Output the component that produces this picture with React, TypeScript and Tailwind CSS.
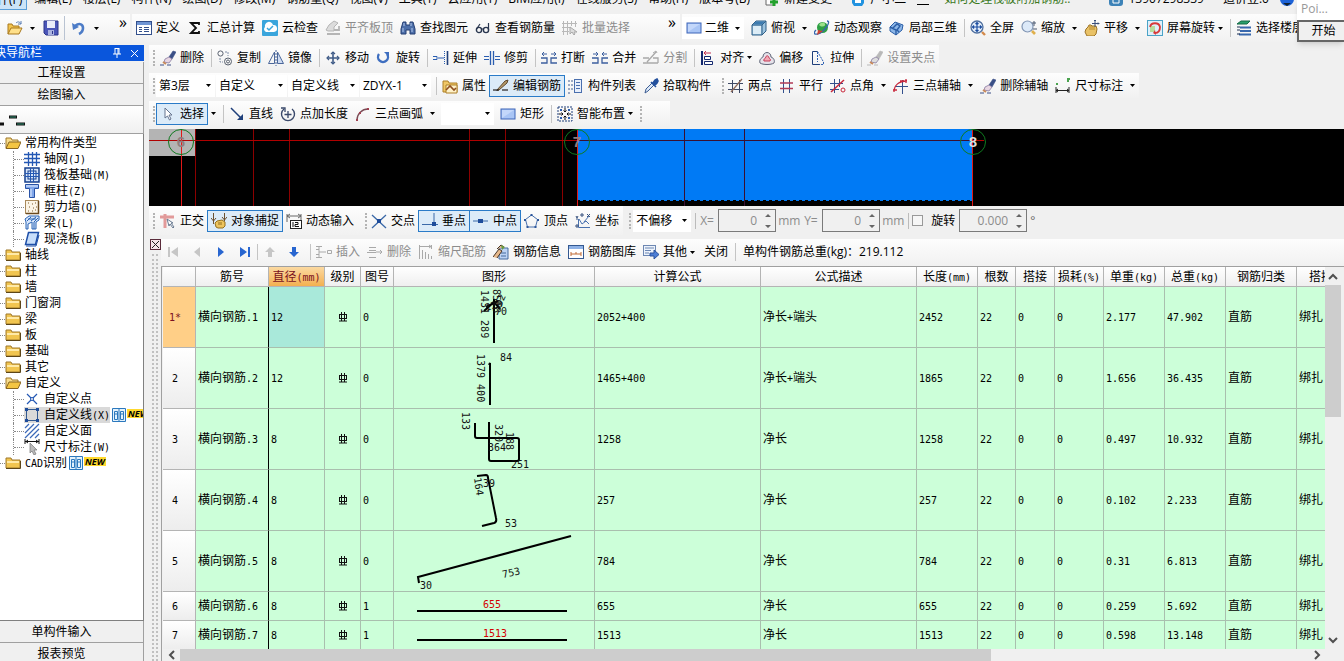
import type { ReactNode } from "react";

const blue = "#2a5db0";
const navy = "#1f3f7a";
const gray = "#a9a9a9";

function Icon({ children }: { children: ReactNode }) {
  return (
    <svg aria-hidden="true" className="shrink-0" fill="none" height="16" viewBox="0 0 16 16" width="16">
      {children}
    </svg>
  );
}

const brush = (tint: string, metal: string) => (
  <Icon>
    <path d="M9 7 13 1l3 1-4 7z" fill={tint} stroke={tint} strokeWidth=".6" />
    <path d="m5 9 4-2 3 2-3 4-5-1z" fill={metal} stroke="#7b6f96" strokeWidth=".7" />
    <path d="m3 12 3 2" stroke="#c98a5a" strokeWidth="2" />
    <path d="M0 15h4M7 15h4" stroke={tint} />
  </Icon>
);

const beams = (color: string, arrow: string) => (
  <Icon>
    <path d="M0 8h6v5H0M16 8h-6v5h6" stroke={color} strokeWidth="1.300" />
    <path d={arrow} stroke={color} />
  </Icon>
);

const icons: Record<string, ReactNode> = {
  open: (
    <Icon>
      <path d="M1 14V4h4l1 2h6v3" fill="#f3c44d" stroke="#a8781e" />
      <path d="M1 14 4 8h11l-3 6z" fill="#ffe08a" stroke="#a8781e" />
      <path d="M9 3c2-2 4-1 5 1m0-3v3h-3" stroke="#5a7fb5" />
    </Icon>
  ),
  save: (
    <Icon>
      <path d="M1 1h14v14H3l-2-2z" fill="#4a55b8" stroke="#2b348a" />
      <path d="M4 1h8v7H4z" fill="#e9ecfa" />
      <path d="M5 10h6v5H5z" fill="#aab2df" />
      <path d="M9 11h1v3H9z" fill="#2b348a" />
    </Icon>
  ),
  undo: (
    <Icon>
      <path d="M4 6c5-4 8-1 8 2 0 3-2 5-4 6" stroke="#4d7cc7" strokeWidth="2.600" />
      <path d="m1 3 1 7 6-3z" fill="#4d7cc7" />
    </Icon>
  ),
  define: (
    <Icon>
      <rect fill="#fff" height="13" stroke="#33508c" width="15" x=".5" y="1.500" />
      <path d="M1 2h14v3H1z" fill="#6f95d4" />
      <path d="M3 7.500h3M3 9.500h3M3 11.500h3M8 7.500h5M8 9.500h5M8 11.500h5" stroke="#33508c" />
    </Icon>
  ),
  sigma: (
    <Icon>
      <path d="M12 5V3H4l5 5-5 5h8v-2" stroke="#111" strokeWidth="1.800" />
    </Icon>
  ),
  cloud: (
    <Icon>
      <rect fill="#3aa5dc" height="16" rx="1" width="16" />
      <path d="M4 12a3 3 0 0 1-1-5 4 4 0 0 1 8-2 3.500 3.500 0 0 1 1 7z" fill="#fff" />
      <path d="m5 8 2 2 4-4" stroke="#3aa5dc" strokeWidth="1.500" />
    </Icon>
  ),
  flatTop: (
    <Icon>
      <path d="m1 10 3-5 5-4 4 2-4 4v4H3z" fill="#dcdcdc" stroke="#b5b5b5" />
      <path d="M2 14h13M9 10h5V6" stroke="#b5b5b5" strokeWidth="1.800" />
    </Icon>
  ),
  binoculars: (
    <Icon>
      <path d="M3 2h3v3h4V2h3l2 7v5h-5v-4H6v4H1V9z" fill="#4d6fa9" stroke="#253f73" />
      <path d="M3 8v4M12 8v4M4 3v3M11 3v3" stroke="#b5caee" />
    </Icon>
  ),
  glasses: (
    <Icon>
      <circle cx="4" cy="10" r="2.600" stroke="#29364f" strokeWidth="1.400" />
      <circle cx="11" cy="10" r="2.600" stroke="#29364f" strokeWidth="1.400" />
      <path d="M1.500 9 5 4M13.500 10V3M6.500 9h2" stroke="#29364f" strokeWidth="1.200" />
    </Icon>
  ),
  batch: (
    <Icon>
      <path d="M1.500 1v14M5.500 1v14M9.500 1v5M13.500 1v6M0 3.500h15M0 7.500h8M0 11.500h7" stroke="#b9b9b9" />
      <path d="M8 7v7l2-2 2 3 1-1-1-2h3z" fill="#ddd" stroke="#aaa" />
    </Icon>
  ),
  rect: (
    <Icon>
      <rect fill="#a9c5f5" height="10" stroke="#3c64b8" width="14" x="1" y="3" />
      <path d="M2 4h12L2 12z" fill="#c3d7fa" />
    </Icon>
  ),
  cube: (
    <Icon>
      <path d="M1 5 5 1h10v10l-4 4H1z" fill="#9cc3df" stroke="#2f5f86" />
      <path d="M1 5h10v10M11 5l4-4" stroke="#2f5f86" />
      <path d="M2 6h8v8H2z" fill="#dcecf6" />
      <path d="M2 4.500 5 1.500h9l-3 3z" fill="#3d7bb0" />
    </Icon>
  ),
  orbit: (
    <Icon>
      <circle cx="8.500" cy="7.500" fill="#2fa045" r="5.500" />
      <path d="M5 5c2-3 5-3 6-1s-3 4-6 1z" fill="#9be08b" />
      <path d="M13 1c5 0-3 11-9 13-5 1-4-2-2-4" stroke="#3567ad" strokeWidth="1.300" />
      <path d="m3 15 6-4-5-1z" fill="#d04030" />
    </Icon>
  ),
  local3d: (
    <Icon>
      <path d="m1 7 5-5 8 3-1 5-6 5-6-4z" fill="#8db7e8" stroke="#2b5ea6" />
      <path d="m4 8 4-4 3 2-3 4 2 2M1 7l6 3v5" stroke="#2b5ea6" strokeWidth="1.400" />
    </Icon>
  ),
  fullscreen: (
    <Icon>
      <circle cx="7" cy="7" fill="#e5effa" r="6" stroke="#4f6f9f" strokeWidth="1.300" />
      <path d="M7 2v10M2 7h10M5.500 4 7 2.500 8.500 4M5.500 10 7 11.500 8.500 10M4 5.500 2.500 7 4 8.500M10 5.500 11.500 7 10 8.500" stroke="#1c4da0" strokeWidth="1.200" />
      <path d="m12 12 3 3" stroke="#d28a4c" strokeWidth="2.400" />
    </Icon>
  ),
  zoom: (
    <Icon>
      <circle cx="6.500" cy="6.500" fill="#dce9f8" r="5.500" stroke="#8296b4" strokeWidth="1.200" />
      <path d="m11 11 3 3" stroke="#e0b04c" strokeWidth="2.600" />
      <path d="M13 1v5M11 3h4M12 9h4" stroke="#4a5870" />
    </Icon>
  ),
  pan: (
    <Icon>
      <path d="m2 9 2-2 1-2h2l1 1h4l1 3-1 5-2 2H3l-2-4z" fill="#e9c267" stroke="#9d7428" />
      <path d="M6 6v4M8 6v4M10 7v3" stroke="#b58a35" />
      <path d="M11 0v7M8 3.500h7M10 1l1-1 1 1M14 2.500l1 1-1 1" stroke="#394e7a" />
    </Icon>
  ),
  screenRotate: (
    <Icon>
      <rect fill="#dff0fa" height="15" stroke="#4aa3c7" width="15" x=".5" y=".5" />
      <path d="M3 6h5v6H3z" fill="#b9dd9c" />
      <path d="M3 7c1-5 9-5 10 0 0 4-2 6-5 6" stroke="#d83a3a" strokeWidth="1.800" />
      <path d="m8 10-2 3 3 2z" fill="#d83a3a" />
    </Icon>
  ),
  floors: (
    <Icon>
      <path d="m1 4 4-3h9l-3 3z" fill="#2aa06d" stroke="#176a47" />
      <path d="M4 7.500h11M4 11h11M3 14.500h12" stroke="#3868ae" strokeWidth="1.800" />
      <path d="M1 7h3M1 10h3M1 14h3" stroke="#1c2f50" />
    </Icon>
  ),
  erase: brush("#3a4f86", "#e8d6e2"),
  copy: (
    <Icon>
      <circle cx="3.500" cy="3.500" r="2.600" stroke="#59616f" />
      <circle cx="11" cy="11.500" r="3.500" stroke="#59616f" />
      <circle cx="11" cy="11.500" r="1.500" stroke="#59616f" />
      <path d="M8 2h3v4M3 8v4h3" stroke="#7e8ca5" strokeDasharray="2 1" />
    </Icon>
  ),
  mirror: (
    <Icon>
      <path d="M6.500 2v11.500h-6z" stroke="#4b679a" />
      <path d="M9.500 2v11.500h6z" fill="#cfdcf2" stroke="#4b679a" />
      <path d="M8 0v16" stroke="#4b679a" strokeDasharray="2 1" />
    </Icon>
  ),
  move: (
    <Icon>
      <path d="M8 2v12M2 8h12" stroke="#3f5b87" strokeWidth="1.600" />
      <path d="m6 4 2-2 2 2M6 12l2 2 2-2M4 6 2 8l2 2M12 6l2 2-2 2" stroke="#3f5b87" strokeWidth="1.200" />
    </Icon>
  ),
  rotate: (
    <Icon>
      <path d="M3 4a5 5 0 1 0 8 0" stroke="#3f6fc0" strokeWidth="2.400" />
      <path d="M8 2h5v5z" fill="#3f6fc0" />
    </Icon>
  ),
  extend: (
    <Icon>
      <path d="M0 6.500h4v3H0M5 8h6" stroke={blue} />
      <path d="M11.500 1v14" stroke={blue} strokeDasharray="1 1" />
      <path d="M14.500 1v14" stroke={navy} strokeWidth="1.600" />
    </Icon>
  ),
  trim: (
    <Icon>
      <path d="M0 6.500h5M0 9.500h5M11 6.500h5M11 9.500h5" stroke={blue} />
      <path d="M6.500 1v14M9.500 1v14" stroke={blue} strokeWidth="1.300" />
    </Icon>
  ),
  break: beams("#3c5f9e", "M1 4h5M10 4h5M3 2 1 4l2 2M13 2l2 2-2 2"),
  join: beams("#3c5f9e", "M1 4h5M10 4h5M4 2l2 2-2 2M12 2l-2 2 2 2"),
  split: (
    <Icon>
      <path d="M0 8h6M0 13h15M10 8h5V13M4 12l9-10" stroke={gray} strokeWidth="1.300" />
      <path d="m10 3 3-2 1 2" stroke={gray} />
    </Icon>
  ),
  align: (
    <Icon>
      <path d="M2 1v14" stroke="#14286e" strokeWidth="2" />
      <path d="M4.500 6.500h6v3h-6zM4.500 11.500h8v3h-8z" fill="#fff" stroke="#14286e" />
      <path d="M4 3h7M6 1 4 3l2 2" stroke="#c43050" />
    </Icon>
  ),
  offset: (
    <Icon>
      <path d="M1 13c-1-3 1-5 3-6 0-6 8-6 8 0 3 1 4 4 3 6-3 2-11 2-14 0z" fill="#e6e2ea" stroke="#5f6578" />
      <path d="M5 11c-1-2 1-2 1.500-3 .5-3 3-3 3.500 0 1 1 2 1 1 3z" fill="#f2a9b6" stroke="#c43d58" />
    </Icon>
  ),
  stretch: (
    <Icon>
      <path d="M7.500 1.500 13.500 12v2.500h-6" stroke={blue} strokeDasharray="2 1" />
      <path d="M7.500 1.500h-5v13h7" stroke={navy} />
      <path d="M7.500 2v10" stroke={blue} strokeDasharray="2 1" />
    </Icon>
  ),
  clamp: brush("#b9b9b9", "#ddd"),
  property: (
    <Icon>
      <path d="M1 3h5l1 2h8v9H1z" fill="#f0c766" stroke="#ad8028" />
      <path d="M4 7h11v8H4z" fill="#fff2c9" stroke="#ad8028" />
      <path d="m4 12 4-4 4 4 2-2" stroke="#8f4f20" strokeWidth="1.600" />
    </Icon>
  ),
  editBar: (
    <Icon>
      <path d="M0 12h6M9 12h6" stroke="#4a4a4a" strokeWidth="1.400" />
      <path d="m4 12 8-9 3-1-1 3-8 7z" fill="#b59a6a" stroke="#5f4930" />
      <path d="m3 13 3-1-1-1z" fill="#111" />
    </Icon>
  ),
  list: (
    <Icon>
      <path d="M0 3h2M3 3h2M0 7h2M3 7h2M0 11h2M3 11h2M0 15h2" stroke="#425f91" />
      <rect fill="#e8effb" height="13" stroke="#4a6fae" width="7" x="6.500" y="1.500" />
      <path d="M8 4.500h4M8 7.500h4M8 10.500h4" stroke="#4a6fae" />
    </Icon>
  ),
  picker: (
    <Icon>
      <path d="m2 15 1-4 6-6 2 2-6 6z" fill="#dbe8f8" stroke="#3d5d92" />
      <path d="m8 4 5 5M10 5l2-3 2-1 1 2-1 2-2 2z" fill="#24519d" stroke="#24519d" strokeWidth="1.600" />
    </Icon>
  ),
  twoPoint: (
    <Icon>
      <path d="M4.500 2v13M11.500 2v13M0 5.500h15M0 11.500h15" stroke="#3f4a66" />
      <path d="m3 14 11-13" stroke="#8d6a5a" strokeWidth="1.200" />
    </Icon>
  ),
  parallel: (
    <Icon>
      <path d="M4.500 1v14M10.500 1v14" stroke="#33508c" />
      <path d="M1 5h13M1 10.500h13" stroke="#b03a55" strokeWidth="1.300" />
    </Icon>
  ),
  pointAngle: (
    <Icon>
      <path d="M4.500 1v14M0 5.500h13M9.500 1v8M0 11.500h9" stroke="#33508c" />
      <path d="M1 14 14 2" stroke="#c8283c" strokeWidth="1.500" />
      <circle cx="13" cy="12" r="2" stroke="#c8283c" />
    </Icon>
  ),
  threeAxis: (
    <Icon>
      <path d="M9.500 2v14M2 8.500h13" stroke="#33508c" />
      <path d="M1 14C1 7 6 3 14 3M0 12h4M7 3h4M13 1v4" stroke="#c8283c" strokeWidth="1.300" />
    </Icon>
  ),
  dimension: (
    <Icon>
      <path d="M1 9v6M14 9v6M1 12.500h13M3 11l-2 1.500L3 14M12 11l2 1.500-2 1.500" stroke="#222" />
      <path d="M1 6h2M12 1h3M12 3h2" stroke="#4ba34f" strokeWidth="2" />
    </Icon>
  ),
  pointer: (
    <Icon>
      <path d="M5 2v10l2.500-2 2 4 1.500-1-2-4h3z" fill="#fff" stroke="#66758f" />
    </Icon>
  ),
  line: (
    <Icon>
      <path d="m2 2 11 11" stroke={navy} strokeWidth="1.500" />
      <path d="M14 8v6H8z" fill={navy} />
    </Icon>
  ),
  addLength: (
    <Icon>
      <path d="M4 3a6.500 6.500 0 1 0 8 0" stroke="#39486a" strokeWidth="1.400" />
      <path d="M1 2h4v4M8 5v7M4.500 8.500h7" stroke="#39486a" strokeWidth="1.300" />
    </Icon>
  ),
  arc: (
    <Icon>
      <path d="M2 14C2 8 7 3 13 3" stroke="#7a4b55" strokeWidth="1.300" />
      <path d="M1 13h2v2H1zM4 6h2v2H4zM12 2h2v2h-2z" fill="#a04050" />
    </Icon>
  ),
  smart: (
    <Icon>
      <rect height="14" stroke={navy} strokeDasharray="2 1" width="14" x="1" y="1" />
      <path d="M8 2v4M8 10v4M2 8h4M10 8h4M6.500 4.500 8 6l1.500-1.500M6.500 11.500 8 10l1.500 1.500M4.500 6.500 6 8 4.500 9.500M11.500 6.500 10 8l1.500 1.500" stroke="#111" />
      <path d="M3 3h2v2H3zM11 3h2v2h-2zM3 11h2v2H3zM11 11h2v2h-2z" fill={blue} />
    </Icon>
  ),
  ortho: (
    <Icon>
      <path d="M5 1v14M0 4h14" stroke="#e29a9a" strokeWidth="3" />
      <path d="m7 6 2 7 1-2 3 4 1-1-3-4h2z" fill="#fff" stroke="#6a7b92" />
    </Icon>
  ),
  snap: (
    <Icon>
      <path d="M2.500 0v11M13.500 0v8M0 5l2.500 3L5 5M11 4l2.500 3L16 4" stroke="#6b5030" />
      <path d="m5 14-1-4 2-2 5-1 3 2v4l-2 2H7z" fill="#edc45e" stroke="#94701f" />
      <path d="M8 9v3M10 9v3" stroke="#94701f" />
    </Icon>
  ),
  dynInput: (
    <Icon>
      <path d="M1 1v8M15 1v6M1 3h14M4 1 1 3l3 2M12 1l3 2-3 2" stroke="#666" />
      <rect fill="#fff" height="8" stroke="#222" width="11" x="4.500" y="7.500" />
      <path d="M7 9v5M9 9.500h3v2H9v2h4" stroke="#111" />
    </Icon>
  ),
  cross: (
    <Icon>
      <path d="m1 2 14 13M15 2 1 15" stroke="#3b69a8" strokeWidth="1.300" />
      <path d="M6 6h4v4H6z" fill="#1e4c9b" />
    </Icon>
  ),
  perpendicular: (
    <Icon>
      <path d="M0 11.500h16M12 0v11" stroke="#3b69a8" />
      <path d="M10 9h4v4h-4z" fill="#1e4c9b" />
    </Icon>
  ),
  midpoint: (
    <Icon>
      <path d="M0 8h15" stroke="#3b69a8" />
      <path d="M5 6h5v4H5z" fill="#1e4c9b" />
    </Icon>
  ),
  pentagon: (
    <Icon>
      <path d="m7.500 2 6 4.500L11.500 14h-8l-2-7.500z" stroke="#4971ae" />
      <path d="M6.500 1h2v2h-2zM13 6h2v2h-2zM0 6h2v2H0zM2.500 13h2v2h-2zM10.500 13h2v2h-2z" fill="#2d579b" />
    </Icon>
  ),
  coordinate: (
    <Icon>
      <path d="M3.500 6v8.500H15M4 6l3 5 4-3 3 3M9 9l5-6" stroke="#4971ae" />
      <path d="M1 3l1 2 1-2M2 5v2M12 1l3 3M15 1l-3 3M1 12h2v2H1zM6 1h2v2H6z" stroke="#37517e" />
    </Icon>
  ),
  insertRow: (
    <Icon>
      <path d="M0 2.500h6M0 13.500h6M3 2v12M3 8h7M0 5.500h3M0 10.500h3" stroke={gray} />
      <path d="M11.500 6.500h4v3h-4z" stroke={gray} />
    </Icon>
  ),
  deleteRow: (
    <Icon>
      <path d="M2 3.500h7M0 8.500h9M2 13.500h7M2 6.500h7M9 8h6M13 6l2 2-2 2" stroke={gray} />
    </Icon>
  ),
  scale: (
    <Icon>
      <path d="M1.500 1v14M13.500 1v4M2 2.500h11M11 1l2 1.500L11 4M4.500 6v9M7.500 8v7M10.500 10v5M13.500 12v3" stroke={gray} />
    </Icon>
  ),
  barInfo: (
    <Icon>
      <path d="M6 4h9v11H6z" fill="#bcd3f3" stroke="#456a9f" />
      <path d="M8 12h5M8 9h5" stroke="#456a9f" />
      <path d="m0 13 6-8 3 2-5 7M4 5l4-4 3 2" fill="#e7b98c" stroke="#493728" />
      <path d="m8 1 4 2-3 3" fill="#6b9a40" />
    </Icon>
  ),
  gallery: (
    <Icon>
      <rect fill="#fff" height="13" stroke="#345991" width="15" x=".5" y="1.500" />
      <path d="M1 2h14v3H1z" fill="#8fb2e6" />
      <path d="M3 8v4M3 10h10M13 8v4M8 8v2" stroke="#c06a34" />
    </Icon>
  ),
  other: (
    <Icon>
      <rect fill="#edf3fc" height="10" stroke="#6d87b2" width="12" x=".5" y="1.500" />
      <path d="M2 4h9M2 6.500h6M2 9h4" stroke="#6d87b2" />
      <path d="M7 9h4V6l5 4.500L11 15v-3H7z" fill="#4c7dd5" stroke="#28529f" />
    </Icon>
  ),
  folder: (
    <Icon>
      <path d="M1 13V3h5l1 2h8v8z" fill="#f1c550" stroke="#9f782a" />
      <path d="M2 6h12v2H2z" fill="#ffeaa8" />
      <path d="M1 13.500h14.500V6" stroke="#5d4618" />
    </Icon>
  ),
  folderOpen: (
    <Icon>
      <path d="M1 13V3h5l1 2h6v2" fill="#f8dd8c" stroke="#9f782a" />
      <path d="M1 13.500 4 7h12l-3 6.500z" fill="#f4c542" stroke="#8a6620" />
    </Icon>
  ),
  grid: (
    <Icon>
      <path d="M4.500 1v14M8.500 1v14M12.500 1v14M0 3.500h16M0 7.500h16M0 11.500h16" stroke="#2458b4" strokeWidth="1.300" />
    </Icon>
  ),
  raft: (
    <Icon>
      <rect fill="#d4e4fa" height="14" stroke="#163f8c" strokeWidth="1.500" width="14" x="1" y="1" />
      <rect height="8" stroke="#163f8c" width="8" x="4" y="4" />
      <path d="M6.500 1v14M9.500 1v14M1 6.500h14M1 9.500h14" stroke="#2458b4" />
    </Icon>
  ),
  column: (
    <Icon>
      <path d="M1.500 1.500h13v4h-4v9h-5v-9h-4z" fill="#7fa6ea" stroke="#2953a6" />
      <path d="M2 3h12M7 6v8" stroke="#e8f0ff" />
    </Icon>
  ),
  wall: (
    <Icon>
      <rect fill="#fbf4e6" height="13" stroke="#a98a5b" width="13" x="1.500" y="1.500" />
      <path d="M4 4h1M8 5h1M11 4h1M5 8h1M9 9h1M12 8h1M4 12h1M8 12h1M11 11h1" stroke="#7d5b2b" />
      <path d="M14.500 2v12.500H2" stroke="#6b4a1e" strokeWidth="1.500" />
    </Icon>
  ),
  beam: (
    <Icon>
      <path d="M1 4 5 1h10v4l-3 2v7H8V7L4 9v5H2V7z" fill="#d7e6fb" stroke="#2a64b5" />
      <path d="m3 6 4-4M7 6l5-4M10 14V7l4-4M4 4h8" stroke="#2a64b5" />
    </Icon>
  ),
  slab: (
    <Icon>
      <path d="M4.500 1.500h10l-3 12h-10z" fill="#c8defa" stroke="#1e4fa8" strokeWidth="1.500" />
      <path d="M2 15h10l3-11" stroke="#1e4fa8" />
    </Icon>
  ),
  customPoint: (
    <Icon>
      <path d="m3 3 10 10M13 3 3 13" stroke="#2458b4" strokeWidth="1.200" />
      <circle cx="8" cy="8" fill="#fff" r="1.500" stroke="#2458b4" />
    </Icon>
  ),
  customLine: (
    <Icon>
      <path d="M2.500 3v10M13.500 3v10M3 2.500h10M3 13.500h10" stroke="#33598f" />
      <path d="M1 1h3v3H1zM12 1h3v3h-3zM1 12h3v3H1zM12 12h3v3h-3z" fill="#1e4c9b" />
    </Icon>
  ),
  customFace: (
    <Icon>
      <path d="m1 5 4-4M1 10l9-9M1 15 15 1M6 15l9-9M11 15l4-4" stroke="#3b69b8" strokeWidth="1.200" />
    </Icon>
  ),
  treeDimension: (
    <Icon>
      <path d="M1 0v5M15 0v5M1 2.500h14M4 1 2 2.500 4 4M12 1l2 1.500L12 4" stroke="#111" />
      <path d="M6 4v10l2-2 2 4 2-1-2-4h3z" fill="#bbb" stroke="#777" strokeWidth=".7" />
    </Icon>
  ),
  book: (
    <Icon>
      <path d="M1.500 1.500h13v13h-13z" fill="#e3f2fd" stroke="#2b78bd" />
      <path d="M3.500 4.500h3v8h-3zM9.500 4.500h3v8h-3zM4 7h2M10 7h2M8 2v12" stroke="#2b78bd" />
    </Icon>
  ),
};

function Caret({ tight = false }: { tight?: boolean }) {
  return (
    <svg aria-hidden="true" className={tight ? "-ml-px shrink-0" : "ml-[3px] shrink-0"} height="3" viewBox="0 0 5 3" width="5">
      <path d="M0 0h5L2.500 3z" fill="#000" />
    </svg>
  );
}

type ToolProps = {
  icon: string;
  label: string;
  active?: boolean;
  disabled?: boolean;
  caret?: "wide" | "tight";
};

function Tool({ icon, label, active, disabled, caret }: ToolProps) {
  return (
    <button
      className={`flex h-[22px] shrink-0 items-center gap-1 whitespace-nowrap ${
        active ? "-mx-1 border border-[#2a7bc8] bg-[#dcebf8] px-[3px]" : ""
      } ${disabled ? "text-[#8c8c8c]" : "text-black"}`}
      disabled={disabled}
      type="button"
    >
      {icons[icon]}
      <span>{label}</span>
      {caret && <Caret tight={caret === "tight"} />}
    </button>
  );
}

function Sep() {
  return <span className="-mr-[2px] h-[18px] w-px shrink-0 bg-[#c4c4c4]" />;
}

function Grip() {
  return <span className="h-4 w-0 shrink-0 border-l-2 border-dotted border-[#b4b4b4]" />;
}

function Bar({ children, end = "pr-1" }: { children: ReactNode; end?: string }) {
  return (
    <div
      className={`flex h-full shrink-0 items-center gap-[7px] bg-linear-to-b from-[#fdfdfd] to-[#f1f1f1] pl-1 ${end}`}
    >
      {children}
    </div>
  );
}

function Combo({ label, value, width }: { label: string; value: string; width: string }) {
  return (
    <span className={`relative flex h-[22px] shrink-0 items-center bg-white ${width}`}>
      <select aria-label={label} className="h-full w-full appearance-none bg-transparent pl-[3px] outline-none">
        <option>{value}</option>
      </select>
      <span className="pointer-events-none absolute right-1 flex">
        <Caret />
      </span>
    </span>
  );
}

function Spin({ label, value, width }: { label: string; value: string; width: string }) {
  return (
    <span className={`flex h-[23px] shrink-0 items-center border border-[#7a7a7a] pr-1 ${width}`}>
      <input
        aria-label={label}
        className="w-full min-w-0 bg-transparent pr-2 text-right text-[12px] text-[#8c8c8c] outline-none"
        defaultValue={value}
        type="text"
      />
      <svg aria-hidden="true" className="shrink-0" height="16" viewBox="0 0 6 16" width="6">
        <path d="M0 4h6L3 1zM0 12h6l-3 3z" fill="#666" />
      </svg>
    </span>
  );
}

const menus = [
  "编辑(E)", "楼层(L)", "构件(N)", "绘图(D)", "修改(M)", "钢筋量(Q)", "视图(V)",
  "工具(T)", "云应用(Y)", "BIM应用(I)", "在线服务(S)", "帮助(H)", "版本号(B)",
];

function MenuBar() {
  return (
    <nav className="flex h-[14px] shrink-0 items-start overflow-hidden whitespace-nowrap">
      <div className="-mt-2 flex items-start gap-[11px] leading-[14px]">
        <a className="-ml-4 h-[18px] border border-[#5a9fd8] bg-[#cce4f7] pr-1" href="#file">
          文件(F)
        </a>
        <div className="-ml-1 flex gap-[11px]">
          {menus.map((menu) => (
            <a href={`#${menu}`} key={menu}>
              {menu}
            </a>
          ))}
        </div>
        <a className="ml-1 flex gap-[5px]" href="#new">
          <svg height="14" viewBox="0 0 14 14" width="14">
            <path d="M1 0v13h8" fill="#fff" stroke="#666" />
            <path d="M9 6v8M5 10h8" stroke="#23a12d" strokeWidth="3" />
          </svg>
          新建变更
        </a>
        <a className="ml-2 flex gap-[5px]" href="#user">
          <svg height="14" viewBox="0 0 14 14" width="14">
            <path d="M1 3h12v8l-2 3H3l-2-3z" fill="#2293e0" />
            <path d="M4 8h6v3H4z" fill="#fff" />
          </svg>
          广小二
        </a>
        <span className="h-[13px] w-3 border-b border-black" />
        <a className="ml-1 text-[#3c7a1e]" href="#help">
          如何处理筏板附加钢筋..
        </a>
        <a className="ml-7 flex gap-[5px]" href="#phone">
          <svg fill="none" height="14" viewBox="0 0 14 14" width="14">
            <rect fill="#3d83b8" height="14" rx="3" width="14" />
            <path d="M4 7h6v4H4z" stroke="#fff" />
          </svg>
          13907298339
        </a>
        <a className="ml-2" href="#coins">
          造价豆:0
        </a>
        <svg height="14" viewBox="0 0 14 14" width="14">
          <circle cx="7" cy="7" fill="#1d63d8" r="7" />
          <path d="M3 11h8l-4 3z" fill="#123" />
        </svg>
      </div>
    </nav>
  );
}

function MainToolbar() {
  return (
    <div className="flex h-7 shrink-0 items-center gap-[2px] overflow-hidden">
      <div className="flex h-full w-[130px] shrink-0 items-center bg-linear-to-b from-[#fdfdfd] to-[#f1f1f1] pl-[7px]">
        <button aria-label="打开" className="flex items-center gap-1" type="button">
          {icons.open}
          <Caret />
        </button>
        <button aria-label="保存" className="ml-2" type="button">{icons.save}</button>
        <span className="ml-[5px] h-6 w-px bg-[#b9c3d2]" />
        <button aria-label="撤销" className="ml-[6px] flex items-center gap-1" type="button">
          {icons.undo}
          <Caret />
        </button>
        <span className="mb-3 ml-auto pr-[3px] text-[16px] leading-4">»</span>
      </div>
      <div className="flex h-full w-[548px] shrink-0 items-center gap-[7px] bg-linear-to-b from-[#fdfdfd] to-[#f1f1f1] pl-1">
        <Tool icon="define" label="定义" />
        <Tool icon="sigma" label="汇总计算" />
        <Tool icon="cloud" label="云检查" />
        <Tool disabled icon="flatTop" label="平齐板顶" />
        <Tool icon="binoculars" label="查找图元" />
        <Tool icon="glasses" label="查看钢筋量" />
        <Tool disabled icon="batch" label="批量选择" />
        <span className="mb-3 ml-auto pr-1 text-[16px] leading-4">»</span>
      </div>
      <div className="flex h-full min-w-0 flex-1 items-center gap-[7px] overflow-hidden bg-linear-to-b from-[#fdfdfd] to-[#f1f1f1]">
        <span className="flex items-center bg-white pl-1">
          {icons.rect}
          <Combo label="视图" value="二维" width="w-[42px]" />
        </span>
        <Tool caret="wide" icon="cube" label="俯视" />
        <Tool icon="orbit" label="动态观察" />
        <Tool icon="local3d" label="局部三维" />
        <Sep />
        <Tool icon="fullscreen" label="全屏" />
        <Tool caret="wide" icon="zoom" label="缩放" />
        <Tool caret="wide" icon="pan" label="平移" />
        <Tool caret="tight" icon="screenRotate" label="屏幕旋转" />
        <Sep />
        <Tool icon="floors" label="选择楼层" />
      </div>
    </div>
  );
}

type TreeNode = { label: string; icon: string; child?: boolean; selected?: boolean; badge?: boolean };

const tree: TreeNode[] = [
  { label: "常用构件类型", icon: "folderOpen" },
  { label: "轴网(J)", icon: "grid", child: true },
  { label: "筏板基础(M)", icon: "raft", child: true },
  { label: "框柱(Z)", icon: "column", child: true },
  { label: "剪力墙(Q)", icon: "wall", child: true },
  { label: "梁(L)", icon: "beam", child: true },
  { label: "现浇板(B)", icon: "slab", child: true },
  { label: "轴线", icon: "folder" },
  { label: "柱", icon: "folder" },
  { label: "墙", icon: "folder" },
  { label: "门窗洞", icon: "folder" },
  { label: "梁", icon: "folder" },
  { label: "板", icon: "folder" },
  { label: "基础", icon: "folder" },
  { label: "其它", icon: "folder" },
  { label: "自定义", icon: "folderOpen" },
  { label: "自定义点", icon: "customPoint", child: true },
  { label: "自定义线(X)", icon: "customLine", child: true, selected: true, badge: true },
  { label: "自定义面", icon: "customFace", child: true },
  { label: "尺寸标注(W)", icon: "treeDimension", child: true },
  { label: "CAD识别", icon: "folder", badge: true },
];

// Latin runs are set at half the width of a Chinese character.
function Mixed({ text }: { text: string }) {
  return (
    <>
      {text.split(/([\x20-\x7e]+)/).map((part, i) =>
        i % 2 ? (
          <span className="font-['DejaVu_Sans_Mono',monospace] text-[10px]" key={i}>
            {part}
          </span>
        ) : (
          part
        ),
      )}
    </>
  );
}

function PanelButton({ label }: { label: string }) {
  return (
    <button
      className="h-[22px] w-full shrink-0 border-r border-b border-[#a0a0a0] bg-[#f0f0f0] pr-5 text-center"
      type="button"
    >
      {label}
    </button>
  );
}

function Sidebar() {
  return (
    <aside className="flex w-[144px] shrink-0 flex-col overflow-hidden pt-[3px]">
      <div className="flex h-[17px] shrink-0 items-center overflow-hidden border-b border-[#f0f0f0] bg-[#0a56dc] text-white">
        <h2 className="-ml-[6px] whitespace-nowrap">块导航栏</h2>
        <button aria-label="固定" className="ml-auto" type="button">
          <svg fill="none" height="10" viewBox="0 0 10 10" width="10">
            <path d="M3 0v6M7 0v6M3 .5h4M1 6h8M5 6v4M6 1v5" stroke="#fff" />
          </svg>
        </button>
        <button aria-label="关闭面板" className="mr-[5px] ml-2" type="button">
          <svg height="9" viewBox="0 0 9 9" width="9">
            <path d="m1 1 7 7M8 1 1 8" stroke="#fff" />
          </svg>
        </button>
      </div>
      <PanelButton label="工程设置" />
      <PanelButton label="绘图输入" />
      <div className="flex h-7 shrink-0 items-center border-r border-b border-[#a0a0a0] bg-linear-to-b from-white to-[#f0f0f0]">
        <svg height="14" viewBox="0 0 26 14" width="26">
          <path d="M9 4h8M0 11h4M16 11h9" stroke="#111" strokeWidth="3" />
          <path d="M10 4h6M17 11h7" stroke="#2f8f72" />
        </svg>
      </div>
      <ul className="min-h-0 flex-1 overflow-hidden border-r border-b border-[#808080] bg-white pt-px">
        {tree.map((node) => (
          <li className="flex h-4 items-center whitespace-nowrap" key={node.label + node.icon}>
            {node.child ? (
              <span className="ml-[13px] flex h-4 w-[11px] shrink-0 items-center border-l border-dotted border-[#888]">
                <span className="w-full border-t border-dotted border-[#888]" />
              </span>
            ) : (
              <span className="w-[5px] shrink-0 border-t border-dotted border-[#888]" />
            )}
            <span className={`flex h-4 items-center gap-1 ${node.selected ? "bg-[#d9d9d9]" : ""}`}>
              {icons[node.icon]}
              <span>
                <Mixed text={node.label} />
              </span>
            </span>
            {node.badge && (
              <span className="ml-px flex shrink-0 items-center">
                {icons.book}
                <b className="mb-1 bg-[#ffd92e] px-px text-[9px] leading-[9px] italic">NEW</b>
              </span>
            )}
          </li>
        ))}
      </ul>
      <div className="-mb-1 flex shrink-0 flex-col">
        <PanelButton label="单构件输入" />
        <PanelButton label="报表预览" />
      </div>
    </aside>
  );
}

const axes = [
  { x: 32, label: "6" },
  { x: 428, label: "7" },
  { x: 824, label: "8" },
];

function Viewport() {
  return (
    <div className="h-[77px] shrink-0 overflow-hidden bg-black">
      <svg height="77" width="1195">
        <rect fill="#b4b4b4" height="27" width="46" />
        <rect fill="#007af5" height="72" width="395" x="428" />
        <path d="M428 71.500h395" stroke="#000" strokeDasharray="3 3" />
        <path d="M46.500 0v77M104.500 0v77M140.500 0v77M320.500 0v77M356.500 0v77M413.500 0v77" stroke="#8c0000" />
        <path d="M0 11.500h428M823 11.500h12" stroke="#b00000" />
        <path d="M428 11.500h395M535.500 0v77M595.500 0v77" stroke="#3a1030" />
        <path d="M32.500 0v77M428.500 0v77M823.500 0v77" stroke="#e01818" />
        {axes.map((axis) => (
          <g key={axis.label}>
            <circle cx={axis.x} cy="13" fill="none" r="12.500" stroke="#0f7a1f" />
            <text
              fill={axis.label === "8" ? "#ddd" : "#8f7f7f"}
              fontFamily="Liberation Sans, sans-serif"
              fontSize="15"
              fontWeight="bold"
              textAnchor="middle"
              x={axis.x}
              y="18"
            >
              {axis.label}
            </text>
          </g>
        ))}
      </svg>
    </div>
  );
}

function SnapBar() {
  return (
    <div className="flex h-[29px] shrink-0 items-center overflow-hidden">
      <Bar end="pr-[7px]">
        <Grip />
        <span className="-ml-[2px]">
          <Tool icon="ortho" label="正交" />
        </span>
        <Tool active icon="snap" label="对象捕捉" />
        <Tool icon="dynInput" label="动态输入" />
      </Bar>
      <Bar>
        <Grip />
        <span className="-ml-[3px]">
          <Tool icon="cross" label="交点" />
        </span>
        <Tool active icon="perpendicular" label="垂点" />
        <Tool active icon="midpoint" label="中点" />
        <Tool icon="pentagon" label="顶点" />
        <Tool icon="coordinate" label="坐标" />
      </Bar>
      <div className="flex items-center pl-[6px]">
        <Grip />
        <span className="ml-[2px] flex">
          <Combo label="偏移方式" value="不偏移" width="w-[58px]" />
        </span>
        <span className="mx-1 h-4 w-px bg-[#bbb]" />
        <span className="w-[18px] text-[#8c8c8c]">X=</span>
        <Spin label="X" value="0" width="w-[58px]" />
        <span className="w-7 pl-[2px] text-[#8c8c8c]">mm</span>
        <span className="w-[18px] text-[#8c8c8c]">Y=</span>
        <Spin label="Y" value="0" width="w-[58px]" />
        <span className="w-7 pl-[2px] text-[#8c8c8c]">mm</span>
        <label className="flex items-center gap-2 border-l border-[#bbb] pl-[3px]">
          <input className="h-[11px] w-[11px] appearance-none border border-[#999] bg-[#f6f6f6]" type="checkbox" />
          旋转
        </label>
        <span className="ml-1 flex">
          <Spin label="旋转角度" value="0.000" width="w-[68px]" />
        </span>
        <span className="ml-[3px] text-[#666]">°</span>
      </div>
    </div>
  );
}

function NavButton({ label, d, disabled }: { label: string; d: string; disabled?: boolean }) {
  return (
    <button aria-label={label} className="flex w-6 shrink-0 justify-center" disabled={disabled} type="button">
      <svg height="12" viewBox="0 0 12 12" width="12">
        <path d={d} fill={disabled ? "#c6c6c6" : "#2866d0"} />
      </svg>
    </button>
  );
}

function RebarBar() {
  return (
    <div className="flex h-[27px] shrink-0 items-center overflow-hidden bg-linear-to-b from-[#fdfdfd] to-[#f1f1f1] pb-px">
      <NavButton d="M1 1h2v10H1zM11 1v10L4 6z" disabled label="第一条" />
      <NavButton d="M9 1v10L3 6z" disabled label="上一条" />
      <NavButton d="M3 1v10l6-5z" label="下一条" />
      <NavButton d="M9 1h2v10H9zM1 1v10l7-5z" label="最后一条" />
      <span className="h-4 w-px bg-[#c4c4c4]" />
      <NavButton d="m6 1 5 5H8v5H4V6H1z" disabled label="上移" />
      <NavButton d="m6 11 5-5H8V1H4v5H1z" label="下移" />
      <span className="mr-[5px] ml-1 h-4 w-px bg-[#c4c4c4]" />
      <div className="flex items-center gap-[7px]">
        <Tool disabled icon="insertRow" label="插入" />
        <Tool disabled icon="deleteRow" label="删除" />
        <Tool disabled icon="scale" label="缩尺配筋" />
        <Tool icon="barInfo" label="钢筋信息" />
        <Tool icon="gallery" label="钢筋图库" />
        <Tool caret="tight" icon="other" label="其他" />
        <button className="ml-[2px]" type="button">关闭</button>
        <Sep />
        <span className="ml-[2px] whitespace-nowrap">单构件钢筋总重(kg)：219.112</span>
      </div>
    </div>
  );
}

const columns = [
  { title: "", width: "w-[33px]" },
  { title: "筋号", width: "w-[73px]" },
  { title: "直径(mm)", width: "w-14" },
  { title: "级别", width: "w-9" },
  { title: "图号", width: "w-[33px]" },
  { title: "图形", width: "w-[201px]" },
  { title: "计算公式", width: "w-[166px]" },
  { title: "公式描述", width: "w-[156px]" },
  { title: "长度(mm)", width: "w-[61px]" },
  { title: "根数", width: "w-[38px]" },
  { title: "搭接", width: "w-[39px]" },
  { title: "损耗(%)", width: "w-[49px]" },
  { title: "单重(kg)", width: "w-[61px]" },
  { title: "总重(kg)", width: "w-[61px]" },
  { title: "钢筋归类", width: "w-[71px]" },
  { title: "搭接形式", width: "w-[73px]" },
];

const mono = { fontFamily: "DejaVu Sans Mono, monospace", fontSize: 10, fill: "#111" };

const shapes: ReactNode[] = [
  <>
    <path d="M100 12v44M90 24l10-9 6 7M92 20l12-6" stroke="#000" strokeWidth="2" />
    <text {...mono} transform="translate(87 3) rotate(90)">1431 289</text>
    <text {...mono} transform="translate(99 2) rotate(90)">8518</text>
    <text {...mono} transform="translate(92 24) rotate(-15)">120</text>
    <text {...mono} x="101" y="28">70</text>
    <text {...mono} transform="translate(107 20) rotate(-65)">32</text>
  </>,
  <>
    <path d="M95 17l1-2v42" stroke="#000" strokeWidth="2" />
    <text {...mono} transform="translate(83 6) rotate(90)">1379 400</text>
    <text {...mono} x="106" y="13">84</text>
  </>,
  <>
    <path d="M81 14v13q0 2 2 2h40q2 0 2 2v19q0 2-2 2H97q-2 0-2-2V13" stroke="#000" strokeWidth="2" />
    <text {...mono} transform="translate(68 3) rotate(90)">133</text>
    <text {...mono} transform="translate(101 15) rotate(90)">320</text>
    <text {...mono} transform="translate(112 23) rotate(90)">188</text>
    <text {...mono} x="94" y="42">364</text>
    <text {...mono} x="117" y="59">251</text>
  </>,
  <>
    <path d="m83 6 9-1q2 0 2 3l8 40q1 4-2 5l-12 3" stroke="#000" strokeWidth="2" />
    <text {...mono} transform="translate(80 8) rotate(82)">164</text>
    <text {...mono} x="89" y="17">39</text>
    <text {...mono} x="111" y="57">53</text>
  </>,
  <>
    <path d="m177 5-153 41 1 6" stroke="#000" strokeWidth="2" />
    <text {...mono} transform="translate(109 47) rotate(-12)">753</text>
    <text {...mono} x="26" y="58">30</text>
  </>,
  <>
    <path d="M23 19h150" stroke="#000" strokeWidth="2" />
    <text {...mono} fill="#d40000" x="89" y="16">655</text>
  </>,
  <>
    <path d="M23 19h150" stroke="#000" strokeWidth="2" />
    <text {...mono} fill="#d40000" x="89" y="16">1513</text>
  </>,
];

const rows = [
  ["12", "0", "2052+400", "净长+端头", "2452", "2.177", "47.902"],
  ["12", "0", "1465+400", "净长+端头", "1865", "1.656", "36.435"],
  ["8", "0", "1258", "净长", "1258", "0.497", "10.932"],
  ["8", "0", "257", "净长", "257", "0.102", "2.233"],
  ["8", "0", "784", "净长", "784", "0.31", "6.813"],
  ["8", "1", "655", "净长", "655", "0.259", "5.692"],
  ["8", "1", "1513", "净长", "1513", "0.598", "13.148"],
];

function Cell({ text, className = "" }: { text: string; className?: string }) {
  return (
    <td className={`border-r border-b border-[#a9bfae] pl-[2px] ${className}`}>
      <Mixed text={text} />
    </td>
  );
}

function RebarTable() {
  return (
    <table className="w-[1207px] table-fixed border-separate border-spacing-0 whitespace-nowrap">
      <thead>
        <tr className="h-5">
          {columns.map((column, i) => (
            <th
              className={`overflow-hidden border-r border-b border-[#b4b4b4] p-0 pt-px font-normal ${column.width} ${
                i === 2 ? "bg-linear-to-b from-[#fbd9a0] to-[#f3b04f] text-[#7a1020]" : "bg-linear-to-b from-white to-[#efefef]"
              }`}
              key={i}
            >
              <Mixed text={column.title} />
            </th>
          ))}
        </tr>
      </thead>
      <tbody className="bg-[#ccffd9]">
        {rows.map(([diameter, figure, formula, note, length, unit, total], i) => {
          const tall = i < 5;
          return (
            <tr className={tall ? "h-[61px]" : "h-[29px]"} key={i}>
              <th
                className={`border-r border-b border-[#b4b4b4] p-0 pr-2 font-normal ${
                  i === 0 ? "bg-[#ffcf87] text-[#7a1020]" : "bg-linear-to-b from-white to-[#ededed]"
                }`}
              >
                <Mixed text={i === 0 ? "1*" : String(i + 1)} />
              </th>
              <td className="border-r border-b border-r-black border-b-[#a9bfae] pl-[2px]">
                <Mixed text={`横向钢筋.${i + 1}`} />
              </td>
              <Cell className={i === 0 ? "bg-[#a9e9da]" : ""} text={diameter} />
              <td className="border-r border-b border-[#a9bfae] p-0">
                <svg aria-label="三级钢" className="mx-auto" fill="none" height="10" viewBox="0 0 10 10" width="10">
                  <path d="M1.500 2v4.500M8.500 2v4.500M1 2.500h8M3.500 0v9M6.500 0v9M1 6.500h8M1 9h8" stroke="#111" />
                </svg>
              </td>
              <Cell text={figure} />
              <td className="border-r border-b border-[#a9bfae] p-0">
                <svg fill="none" height={tall ? 60 : 28} width="200">
                  {shapes[i]}
                </svg>
              </td>
              <Cell text={formula} />
              <Cell text={note} />
              <Cell text={length} />
              <Cell text="22" />
              <Cell text="0" />
              <Cell text="0" />
              <Cell text={unit} />
              <Cell text={total} />
              <Cell text="直筋" />
              <Cell text="绑扎" />
            </tr>
          );
        })}
      </tbody>
    </table>
  );
}

function Arrow({ d }: { d: string }) {
  return (
    <svg aria-hidden="true" className="shrink-0" fill="none" height="10" viewBox="0 0 10 10" width="10">
      <path d={d} stroke="#505050" strokeWidth="2" />
    </svg>
  );
}

function Dock() {
  return (
    <section className="flex min-h-0 flex-1 pt-1">
      <div className="flex w-3 shrink-0 flex-col items-center gap-1">
        <svg fill="none" height="11" viewBox="0 0 11 11" width="11">
          <rect fill="#f5e6ea" height="10" stroke="#5a2b3b" width="10" x=".5" y=".5" />
          <path d="m2 2 7 7M9 2 2 9" stroke="#222" />
        </svg>
        <div className="flex min-h-0 flex-1 gap-[2px]">
          <span className="border-l-2 border-dotted border-[#c0c0c0]" />
          <span className="border-l-2 border-dotted border-[#c0c0c0]" />
        </div>
      </div>
      <div className="flex min-w-0 flex-1 flex-col">
        <RebarBar />
        <div className="flex min-h-0 flex-1 flex-col border-t border-l border-[#a0a0a0] pl-px">
          <div className="flex min-h-0 flex-1">
            <div className="min-w-0 flex-1 overflow-hidden">
              <RebarTable />
            </div>
            <div className="mr-[3px] flex w-4 shrink-0 flex-col items-center bg-[#f0f0f0] pt-[5px] pb-1">
              <Arrow d="m1 7 4-4 4 4" />
              <span className="mt-[3px] mb-auto h-[132px] w-full bg-[#cdcdcd]" />
              <Arrow d="m1 3 4 4 4-4" />
            </div>
          </div>
          <div className="mr-[19px] flex h-3 shrink-0 items-center bg-[#f0f0f0] pl-1">
            <Arrow d="M7 1 3 5l4 4" />
            <span className="ml-[3px] h-full w-[70%] bg-[#cdcdcd]" />
            <span className="mr-[3px] ml-auto">
              <Arrow d="m3 1 4 4-4 4" />
            </span>
          </div>
        </div>
      </div>
    </section>
  );
}

export default function App() {
  return (
    <div className="relative flex h-screen flex-col overflow-hidden bg-[#f0f0f0] font-['Open_Sans','Noto_Sans_CJK_SC',sans-serif] text-[12px] leading-4 text-black">
      <MenuBar />
      <MainToolbar />
      <div className="flex min-h-0 flex-1 gap-[5px]">
        <Sidebar />
        <main className="flex min-w-0 flex-1 flex-col">
          <div className="flex flex-col gap-[3px] py-[3px]">
            <div className="flex h-[25px] overflow-hidden">
              <Bar>
                <Grip />
                <span className="-ml-[2px]">
                  <Tool icon="erase" label="删除" />
                </span>
                <Sep />
                <Tool icon="copy" label="复制" />
                <Tool icon="mirror" label="镜像" />
                <Sep />
                <Tool icon="move" label="移动" />
                <Tool icon="rotate" label="旋转" />
                <Sep />
                <Tool icon="extend" label="延伸" />
                <Tool icon="trim" label="修剪" />
                <Sep />
                <Tool icon="break" label="打断" />
                <Tool icon="join" label="合并" />
                <Tool disabled icon="split" label="分割" />
                <Sep />
                <Tool caret="tight" icon="align" label="对齐" />
                <Tool icon="offset" label="偏移" />
                <Tool icon="stretch" label="拉伸" />
                <Sep />
                <Tool disabled icon="clamp" label="设置夹点" />
              </Bar>
            </div>

            <div className="flex h-[25px] overflow-hidden">
              <Bar end="pr-[7px]">
                <Grip />
                <span className="-mr-[2px] -ml-[6px] flex gap-px">
                  <Combo label="楼层" value="第3层" width="w-[59px]" />
                  <Combo label="构件分类" value="自定义" width="w-[71px]" />
                  <Combo label="构件类型" value="自定义线" width="w-[71px]" />
                  <Combo label="构件" value="ZDYX-1" width="w-[71px]" />
                </span>
                <Sep />
                <Tool icon="property" label="属性" />
                <Tool active icon="editBar" label="编辑钢筋" />
                <Tool icon="list" label="构件列表" />
                <Tool icon="picker" label="拾取构件" />
              </Bar>
              <Bar>
                <Grip />
                <span className="-ml-[3px]">
                  <Tool icon="twoPoint" label="两点" />
                </span>
                <Tool icon="parallel" label="平行" />
                <Tool caret="wide" icon="pointAngle" label="点角" />
                <Tool caret="wide" icon="threeAxis" label="三点辅轴" />
                <Tool icon="erase" label="删除辅轴" />
                <Tool caret="wide" icon="dimension" label="尺寸标注" />
              </Bar>
            </div>

            <div className="flex h-[25px] overflow-hidden">
              <Bar end="pr-7">
                <Grip />
                <span className="-ml-[2px] flex items-center">
                  <Tool active icon="pointer" label="选择" />
                </span>
                <button aria-label="选择方式" className="ml-px flex h-[22px] items-center" type="button">
                  <Caret tight />
                </button>
                <Sep />
                <Tool icon="line" label="直线" />
                <Tool icon="addLength" label="点加长度" />
                <Tool caret="wide" icon="arc" label="三点画弧" />
                <span className="-mx-px flex">
                  <Combo label="画弧参数" value="" width="w-[53px]" />
                </span>
                <Tool icon="rect" label="矩形" />
                <Sep />
                <Tool caret="tight" icon="smart" label="智能布置" />
                <Grip />
              </Bar>
            </div>
          </div>
          <Viewport />
          <SnapBar />
          <Dock />
        </main>
      </div>

      <div className="absolute top-0 right-0 flex w-[47px] flex-col overflow-hidden bg-white text-[#999] shadow-md">
        <span className="h-5 pt-px pl-1">Poi...</span>
        <button className="h-[22px] border-2 border-r-0 border-[#666] bg-[#f0f0f0] pl-1 text-black" type="button">
          开始
        </button>
      </div>
    </div>
  );
}
